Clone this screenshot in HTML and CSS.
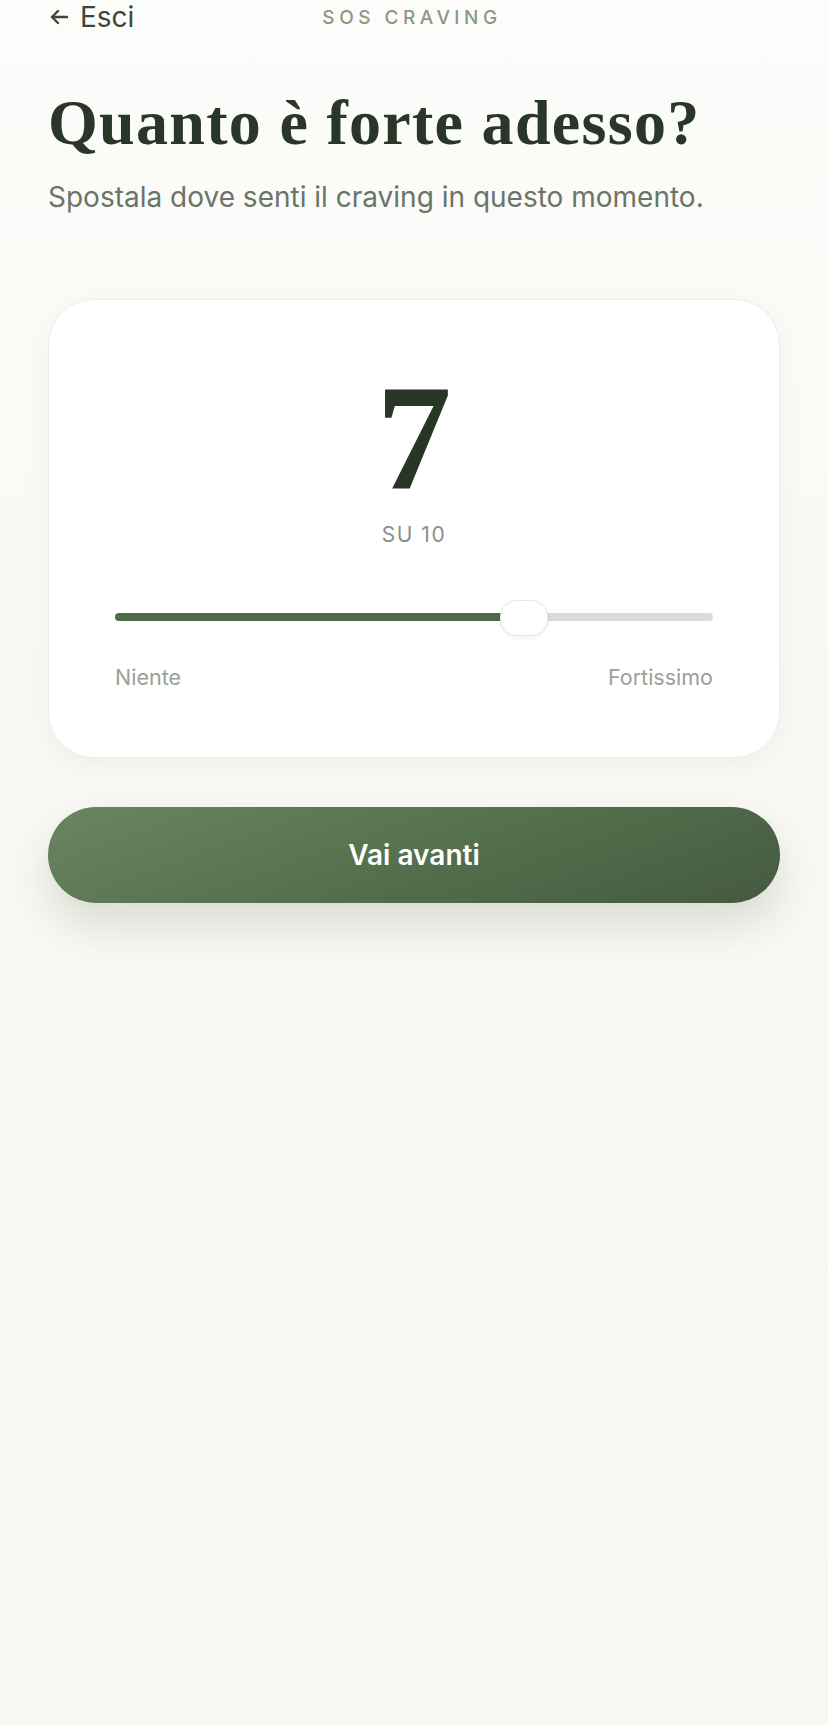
FILE: index.html
```html
<!DOCTYPE html>
<html lang="it">
<head>
    <meta charset="UTF-8">
    <meta name="viewport" content="width=device-width, initial-scale=1.0">
    <title>SOS Craving</title>
    <link rel="stylesheet" href="styles.css">
</head>
<body>
    <div class="screen">
        <header class="topbar">
            <a class="back" href="#">
                <svg width="22" height="22" viewBox="0 0 22 22" fill="none" stroke="currentColor" stroke-width="2.4" stroke-linecap="round" stroke-linejoin="round">
                    <path d="M19 11H4"/>
                    <path d="M10 5l-6 6 6 6"/>
                </svg>
                Esci
            </a>
            <div class="topbar-title">SOS CRAVING</div>
            <div></div>
        </header>

        <h1 class="title">Quanto è forte adesso?</h1>
        <p class="subtitle">Spostala dove senti il craving in questo momento.</p>

        <section class="card">
            <div class="score">7</div>
            <div class="score-scale">SU 10</div>

            <div class="slider">
                <div class="track">
                    <div class="fill" style="width: 68.4%;"></div>
                </div>
                <div class="thumb" style="left: calc(68.4% - 24px);"></div>
            </div>

            <div class="slider-labels">
                <span>Niente</span>
                <span>Fortissimo</span>
            </div>
        </section>

        <button class="next-btn">Vai avanti</button>
    </div>
</body>
</html>
```

FILE: styles.css
```css
body {
    margin: 0;
    padding: 0;
    font-family: Inter, "Noto Sans", sans-serif;
    background: linear-gradient(180deg, #fcfcfa 0%, #f9f8f4 40%, #f8f7f2 100%);
    color: #2a3628;
    min-height: 1725px;
}

.screen {
    padding: 0 48px;
}

/* top bar */
.topbar {
    display: grid;
    grid-template-columns: 1fr auto 1fr;
    align-items: center;
    height: 34px;
}

.back {
    display: flex;
    align-items: center;
    gap: 10px;
    color: #3b4839;
    text-decoration: none;
    font-size: 28px;
    font-weight: 400;
}

.topbar-title {
    font-size: 19px;
    font-weight: 500;
    letter-spacing: 4.5px;
    color: #8a9987;
    margin-right: 4px;
}

/* heading */
.title {
    margin: 54px 0 0;
    font-family: "Liberation Serif", serif;
    font-weight: 700;
    font-size: 64px;
    line-height: 1.1;
    color: #2a3628;
    letter-spacing: 1.3px;
}

.subtitle {
    margin: 22px 0 0;
    font-size: 28px;
    color: #6b7468;
}

/* card */
.card {
    margin-top: 85px;
    background: #fff;
    border: 1px solid #efeee9;
    border-radius: 46px;
    box-shadow: 0 6px 24px rgba(60, 70, 50, 0.05);
    padding: 62px 66px 67px;
    text-align: center;
}

.score {
    font-family: "Liberation Serif", serif;
    font-weight: 700;
    font-size: 150px;
    line-height: 1;
    color: #283626;
}

.score-scale {
    margin-top: 10px;
    font-size: 21px;
    letter-spacing: 1.5px;
    color: #8b8f87;
}

.slider {
    position: relative;
    margin-top: 52px;
    height: 36px;
    display: flex;
    align-items: center;
}

.track {
    width: 100%;
    height: 8px;
    border-radius: 4px;
    background: #dadadc;
    overflow: hidden;
}

.fill {
    height: 100%;
    background: #4f6b48;
}

.thumb {
    position: absolute;
    top: 1px;
    width: 46px;
    height: 34px;
    border-radius: 17px;
    background: #fff;
    border: 1px solid #e6e6e6;
    box-shadow: 0 2px 5px rgba(0, 0, 0, 0.06);
}

.slider-labels {
    display: flex;
    justify-content: space-between;
    margin-top: 29px;
    font-size: 21.5px;
    color: #9aa097;
}

/* button */
.next-btn {
    display: block;
    width: 100%;
    height: 96px;
    margin-top: 49px;
    border: none;
    border-radius: 48px;
    background: linear-gradient(160deg, #6b8562 0%, #55704d 50%, #445a3f 100%);
    color: #fff;
    font-family: Inter, sans-serif;
    font-size: 28px;
    font-weight: 600;
    box-shadow: 0 22px 40px rgba(80, 100, 70, 0.18);
    cursor: pointer;
}
```
